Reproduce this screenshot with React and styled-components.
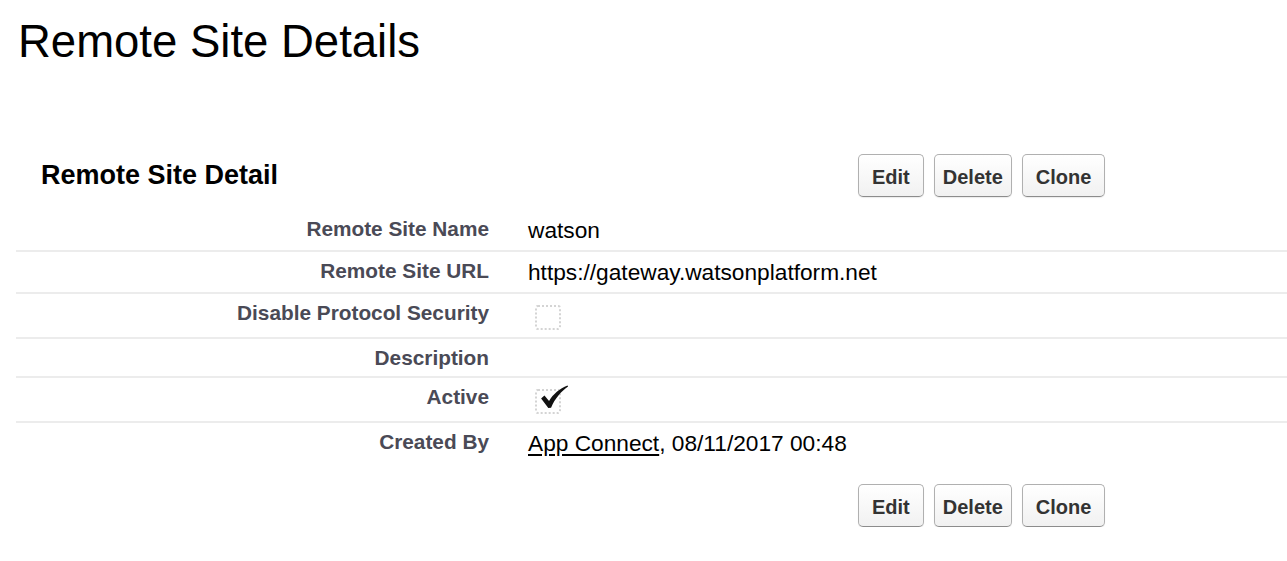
import React from "react";
import styled, { createGlobalStyle } from "styled-components";

const GlobalStyle = createGlobalStyle`
  html, body {
    margin: 0;
    padding: 0;
    background: #ffffff;
  }
  body {
    font-family: "Liberation Sans", Arial, Helvetica, sans-serif;
    color: #000000;
  }
`;

const details = [
  { label: "Remote Site Name", value: "watson" },
  { label: "Remote Site URL", value: "https://gateway.watsonplatform.net" },
  { label: "Disable Protocol Security", checkbox: true, checked: false },
  { label: "Description", value: "" },
  { label: "Active", checkbox: true, checked: true },
  { label: "Created By", createdBy: { name: "App Connect", date: "08/11/2017 00:48" } },
];

function CheckMark() {
  return (
    <Tick viewBox="0 0 31 26" width="29" height="24" aria-hidden="true">
      <path
        d="M1 14.5 L4.6 11.4 L9.6 17.2 C14 10 21 4 29.6 0.6 L30.2 1.6 C22.4 7 15.8 15 11.8 24.6 L8.8 24.8 Z"
        fill="#111"
      />
    </Tick>
  );
}

function ButtonGroup() {
  return (
    <Buttons>
      <Button>Edit</Button>
      <Button $tight>Delete</Button>
      <Button>Clone</Button>
    </Buttons>
  );
}

export default function App() {
  return (
    <>
      <GlobalStyle />
      <Page>
        <PageTitle>Remote Site Details</PageTitle>

        <Block>
          <BlockHeader>
            <BlockTitle>Remote Site Detail</BlockTitle>
            <ButtonGroup />
          </BlockHeader>

          <DetailList>
            {details.map((row, i) => (
              <Row key={row.label} $last={i === details.length - 1}>
                <Label>{row.label}</Label>
                <Value $box={row.checkbox}>
                  {row.checkbox && (
                    <CheckBox>{row.checked && <CheckMark />}</CheckBox>
                  )}
                  {row.value}
                  {row.createdBy && (
                    <>
                      <UserLink href="#">{row.createdBy.name}</UserLink>,{" "}
                      {row.createdBy.date}
                    </>
                  )}
                </Value>
              </Row>
            ))}
          </DetailList>

          <BlockFooter>
            <span />
            <ButtonGroup />
          </BlockFooter>
        </Block>
      </Page>
    </>
  );
}

const Page = styled.main`
  padding: 16px 0 0;
`;

const PageTitle = styled.h1`
  margin: 0 0 0 18px;
  font-size: 45.5px;
  font-weight: 400;
  line-height: 52px;
  color: #000;
`;

const Block = styled.section`
  margin: 86px 0 0 16px;
`;

const BlockHeader = styled.div`
  display: grid;
  grid-template-columns: 842px auto;
  align-items: center;
`;

const BlockFooter = styled(BlockHeader)`
  margin-top: 21px;
`;

const BlockTitle = styled.h2`
  margin: 0;
  padding-left: 25px;
  font-size: 27px;
  font-weight: 700;
  color: #000;
`;

const Buttons = styled.div`
  display: flex;
  gap: 10px;
`;

const Button = styled.button`
  box-sizing: border-box;
  height: 43px;
  padding: 3px ${(p) => (p.$tight ? "8px" : "13px")} 0;
  border: 1px solid #b0b0b0;
  border-bottom-color: #8c8c8c;
  border-radius: 5px;
  background: linear-gradient(#ffffff, #f1f1f1);
  box-shadow: 0 1px 1px rgba(0, 0, 0, 0.08);
  font-family: "Liberation Sans", Arial, Helvetica, sans-serif;
  font-size: 20px;
  font-weight: 700;
  color: #333;
  cursor: pointer;
`;

const DetailList = styled.div`
  margin-top: 13px;
`;

const Row = styled.div`
  display: grid;
  grid-template-columns: 493px 1fr;
  border-bottom: ${(p) => (p.$last ? "none" : "2px solid #ececec")};
`;

const Label = styled.div`
  padding: 7px 20px 6px 0;
  text-align: right;
  font-size: 20.8px;
  line-height: 24px;
  font-weight: 700;
  color: #4a4a56;
`;

const Value = styled.div`
  padding: ${(p) => (p.$box ? "11px 0 7px 26px" : "8px 0 8px 19px")};
  font-size: 22.7px;
  line-height: 24px;
  color: #000;
`;

const CheckBox = styled.div`
  position: relative;
  box-sizing: border-box;
  width: 26px;
  height: 25px;
  border: 2px dotted #d4d4d4;
  border-radius: 3px;
`;

const Tick = styled.svg`
  position: absolute;
  left: 3px;
  top: -6px;
`;

const UserLink = styled.a`
  color: #000;
  text-decoration: underline;
  text-underline-offset: 3px;
`;
